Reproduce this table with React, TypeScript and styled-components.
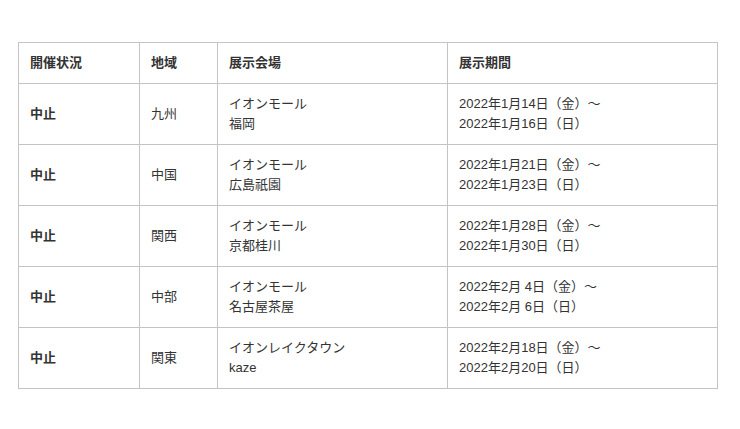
import React from "react";
import styled, { createGlobalStyle } from "styled-components";

const Global = createGlobalStyle`
  html, body { margin: 0; padding: 0; background: #ffffff; }
  body { font-family: "Liberation Sans", "Noto Sans CJK JP", sans-serif; color: #333333; }
`;

const Page = styled.div`
  padding: 42px 18px;
`;

const Table = styled.table`
  border-collapse: collapse;
  table-layout: fixed;
  width: 700px;
  font-size: 13px;
  line-height: 20px;
`;

const HeadCell = styled.th`
  border: 1px solid #c4c4c4;
  padding: 10px 11px 10px 11px;
  text-align: left;
  font-weight: bold;
  vertical-align: middle;
  color: #333333;
`;

const Cell = styled.td<{ $bold?: boolean }>`
  border: 1px solid #c4c4c4;
  padding: 10px 11px 10px 11px;
  vertical-align: middle;
  font-weight: ${(p) => (p.$bold ? "bold" : "normal")};
  color: #333333;
  white-space: nowrap;
`;

const Line = styled.div``;

const rows = [
  { region: "九州", venue: ["イオンモール", "福岡"], period: ["2022年1月14日（金）～", "2022年1月16日（日）"] },
  { region: "中国", venue: ["イオンモール", "広島祇園"], period: ["2022年1月21日（金）～", "2022年1月23日（日）"] },
  { region: "関西", venue: ["イオンモール", "京都桂川"], period: ["2022年1月28日（金）～", "2022年1月30日（日）"] },
  { region: "中部", venue: ["イオンモール", "名古屋茶屋"], period: ["2022年2月 4日（金）～", "2022年2月 6日（日）"] },
  { region: "関東", venue: ["イオンレイクタウン", "kaze"], period: ["2022年2月18日（金）～", "2022年2月20日（日）"] },
];

export default function App() {
  return (
    <>
      <Global />
      <Page>
        <Table>
          <colgroup>
            <col style={{ width: 121 }} />
            <col style={{ width: 78 }} />
            <col style={{ width: 230 }} />
            <col style={{ width: 270 }} />
          </colgroup>
          <thead>
            <tr>
              <HeadCell>開催状況</HeadCell>
              <HeadCell>地域</HeadCell>
              <HeadCell>展示会場</HeadCell>
              <HeadCell>展示期間</HeadCell>
            </tr>
          </thead>
          <tbody>
            {rows.map((r) => (
              <tr key={r.region}>
                <Cell $bold>中止</Cell>
                <Cell>{r.region}</Cell>
                <Cell>
                  {r.venue.map((v) => (
                    <Line key={v}>{v}</Line>
                  ))}
                </Cell>
                <Cell>
                  {r.period.map((v) => (
                    <Line key={v}>{v}</Line>
                  ))}
                </Cell>
              </tr>
            ))}
          </tbody>
        </Table>
      </Page>
    </>
  );
}
